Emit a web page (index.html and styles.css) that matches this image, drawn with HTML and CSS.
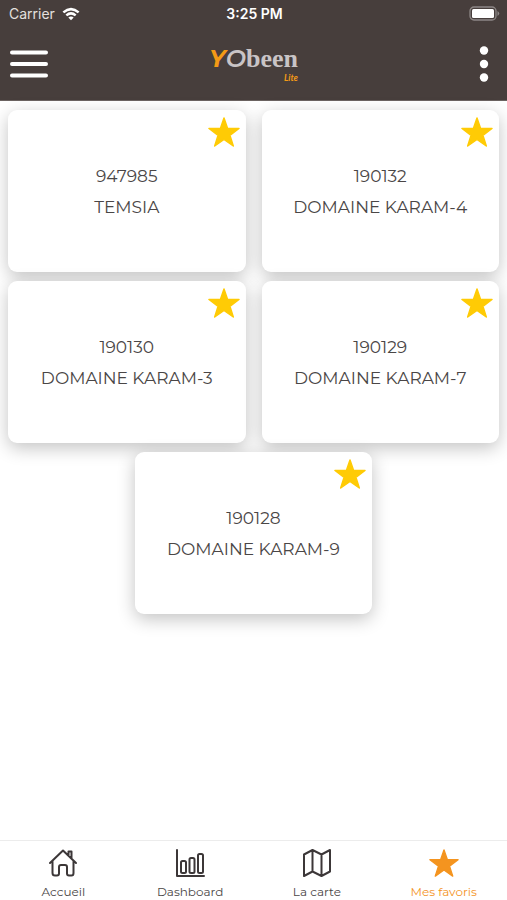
FILE: index.html
```html
<!DOCTYPE html>
<html lang="fr">
<head>
<meta charset="utf-8">
<meta name="viewport" content="width=device-width, initial-scale=1">
<title>Yobeen Lite</title>
<link rel="stylesheet" href="styles.css">
</head>
<body>
<svg class="defs" aria-hidden="true">
  <symbol id="star" viewBox="0 0 32 30">
    <path d="M16 1 19.6 11.5H31L21.9 18.3 25.3 29 16 22.5 6.7 29 10.1 18.3 1 11.5H12.4Z" fill="currentColor" stroke="currentColor" stroke-width="1.5" stroke-linejoin="round"/>
  </symbol>
</svg>
<header class="top">
  <div class="status">
    <span class="carrier">Carrier
      <svg class="wifi" viewBox="0 0 20 14" fill="none" stroke="currentColor" stroke-width="2.8" aria-hidden="true"><path d="M1.5 5.2Q10-2 18.5 5.2M4.8 8.5Q10 4.2 15.2 8.5"/><path d="M7 10.8Q10 8.6 13 10.8L10 14Z" fill="currentColor" stroke="none"/></svg>
    </span>
    <span class="time">3:25 PM</span>
    <svg class="battery" viewBox="0 0 31 15" aria-hidden="true"><rect x="1" y="1" width="26" height="13" rx="4" fill="none" stroke="#8d8786" stroke-width="1.3"/><rect x="3" y="3" width="22" height="9" rx="1.5" fill="#fff"/><path d="M28.5 5Q32 7.5 28.5 10Z" fill="#8d8786"/></svg>
  </div>
  <div class="bar">
    <button class="icon-button" aria-label="Menu"><svg class="burger" viewBox="0 0 40 28" stroke="#fff" stroke-width="4" stroke-linecap="round" aria-hidden="true"><path d="M3 2.5H37M3 14H37M3 25.5H37"/></svg></button>
    <div class="logo"><div class="word"><span class="logo-y">Y</span><span class="logo-o">O</span><span>been</span></div><div class="lite">Lite</div></div>
    <button class="icon-button end" aria-label="Options"><svg class="dots" viewBox="0 0 10 36" fill="#fff" aria-hidden="true"><circle cx="5" cy="4.5" r="4.2"/><circle cx="5" cy="18" r="4.2"/><circle cx="5" cy="31.5" r="4.2"/></svg></button>
  </div>
</header>
<main class="cards">
  <article class="card"><button class="fav" aria-label="Favori"><svg viewBox="0 0 32 30"><use href="#star"/></svg></button><p>947985</p><p>TEMSIA</p></article>
  <article class="card"><button class="fav" aria-label="Favori"><svg viewBox="0 0 32 30"><use href="#star"/></svg></button><p>190132</p><p>DOMAINE KARAM-4</p></article>
  <article class="card"><button class="fav" aria-label="Favori"><svg viewBox="0 0 32 30"><use href="#star"/></svg></button><p>190130</p><p>DOMAINE KARAM-3</p></article>
  <article class="card"><button class="fav" aria-label="Favori"><svg viewBox="0 0 32 30"><use href="#star"/></svg></button><p>190129</p><p>DOMAINE KARAM-7</p></article>
  <article class="card"><button class="fav" aria-label="Favori"><svg viewBox="0 0 32 30"><use href="#star"/></svg></button><p>190128</p><p>DOMAINE KARAM-9</p></article>
</main>
<nav class="tabs">
  <a href="#accueil"><svg viewBox="0 0 30 30" aria-hidden="true"><path d="M2 15 15 2.5 28 15M4.5 13V25Q4.5 27.5 7 27.5H9Q11 27.5 11 25.5V19Q11 17 13 17H17Q19 17 19 19V25.5Q19 27.5 21 27.5H23.5Q25.5 27.5 25.5 25V13M20.5 7V3.5H23.5V10.5"/></svg>Accueil</a>
  <a href="#dashboard"><svg viewBox="0 0 30 30" aria-hidden="true"><path d="M2 2V28H29"/><rect x="6" y="13" width="5" height="12" rx="1.5"/><rect x="14.5" y="10" width="5" height="15" rx="1.5"/><rect x="23" y="6" width="5" height="19" rx="1.5"/></svg>Dashboard</a>
  <a href="#carte"><svg viewBox="0 0 30 30" aria-hidden="true"><path d="M2 6.5 10.5 2 19.5 6.5 28 2V23.5L19.5 28 10.5 23.5 2 28ZM10.5 2V23.5M19.5 6.5V28"/></svg>La carte</a>
  <a href="#favoris" class="active" aria-current="page"><svg viewBox="0 0 32 30" aria-hidden="true"><use href="#star"/></svg>Mes favoris</a>
</nav>
</body>
</html>
```
FILE: styles.css
```css
* { box-sizing: border-box; }
body {
  margin: 0;
  min-height: 100vh;
  display: flex;
  flex-direction: column;
  background: #fff;
  color: #4a4646;
  font-family: Montserrat, Inter, sans-serif;
}
button { border: 0; padding: 0; background: none; cursor: pointer; }
svg { display: block; }
.defs { position: absolute; width: 0; height: 0; }

.top { background: #473e3c; color: #fff; border-bottom: 1px solid #6b6361; }
.status {
  display: grid;
  grid-template-columns: 1fr auto 1fr;
  align-items: center;
  height: 27px;
  padding: 0 7px 0 9px;
  font: 14px Inter, sans-serif;
}
.carrier { display: flex; align-items: center; gap: 7px; color: #e4e0df; }
.wifi { width: 18px; height: 14px; color: #fff; }
.time { font-size: 14px; font-weight: 600; }
.battery { width: 31px; height: 15px; justify-self: end; }
.bar {
  display: grid;
  grid-template-columns: 1fr auto 1fr;
  align-items: center;
  height: 73px;
  padding: 0 18px 0 9px;
}
.burger { width: 40px; height: 28px; }
.icon-button { justify-self: start; }
.end { justify-self: end; }
.dots { width: 10px; height: 36px; }
.logo { padding: 4px 0 0 9px; }
.word {
  display: flex;
  align-items: baseline;
  height: 24px;
  color: #c9c4c6;
  font: bold 26px/24px "Liberation Serif", serif;
}
.logo-y { color: #f39a16; font: italic 700 24px/24px Montserrat, sans-serif; }
.logo-o { font: italic 600 24px/24px Montserrat, sans-serif; }
.lite {
  color: #f39a16;
  font: italic bold 9px/14px Lato, sans-serif;
  text-align: right;
}

.cards {
  flex: 1;
  display: flex;
  flex-wrap: wrap;
  justify-content: center;
  align-content: flex-start;
  gap: 9px 16px;
  padding: 9px 8px;
}
.card {
  position: relative;
  width: calc(50% - 8px);
  min-height: 162px;
  display: flex;
  flex-direction: column;
  justify-content: center;
  padding-top: 2px;
  text-align: center;
  background: #fff;
  border-radius: 9px;
  box-shadow: 0 5px 18px rgba(0, 0, 0, 0.24);
  font-size: 17px;
  line-height: 31px;
}
.card p { margin: 0; }
.fav { position: absolute; top: 7px; right: 6px; color: #ffcb05; }
.fav svg { width: 32px; height: 30px; }

.tabs {
  display: grid;
  grid-template-columns: repeat(4, 1fr);
  height: 60px;
  padding-top: 7px;
  border-top: 1px solid #ececec;
  background: #fff;
}
.tabs a {
  display: flex;
  flex-direction: column;
  align-items: center;
  gap: 6px;
  color: #4a4646;
  font-size: 12px;
  line-height: 16px;
  text-decoration: none;
}
.tabs svg {
  width: 30px;
  height: 30px;
  fill: none;
  stroke: #3c3738;
  stroke-width: 2;
  stroke-linejoin: round;
  stroke-linecap: round;
}
.tabs .active { color: #f4941f; }
.tabs .active svg { stroke: none; }
```
